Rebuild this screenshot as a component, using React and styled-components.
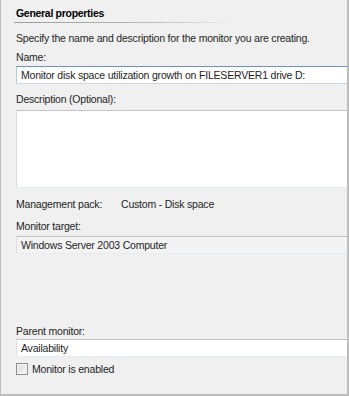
import React from 'react'
import styled, { createGlobalStyle } from 'styled-components'

const GlobalStyle = createGlobalStyle`
  html, body {
    margin: 0;
    padding: 0;
    background: #f0f0f0;
  }
  * {
    box-sizing: border-box;
  }
`

const Frame = styled.div`
  width: 349px;
  height: 396px;
  background: #f0f0f0;
  border-left: 1px solid #bcbcbc;
  border-right: 2px solid #bcbcbc;
  border-bottom: 2px solid #bcbcbc;
  padding: 6px 0 0 14px;
  font-family: 'Liberation Sans', Arial, sans-serif;
  font-size: 10.5px;
  letter-spacing: -0.2px;
  color: #1e1e1e;
  display: flex;
  flex-direction: column;
`

const Header = styled.div`
  font-weight: bold;
  font-size: 10.5px;
  letter-spacing: -0.3px;
  line-height: 14px;
  color: #000;
  padding: 0 0 2px 1px;
`

const Rule = styled.div`
  height: 1px;
  width: 220px;
  margin-left: -1px;
  background: linear-gradient(to right, #9a9a9a 0%, #b8b8b8 60%, rgba(240, 240, 240, 0) 100%);
`

const Text = styled.div`
  line-height: 16px;
  margin-top: ${p => p.$top || 0}px;
  padding-left: 1px;
  white-space: nowrap;
`

const Field = styled.div`
  height: 18px;
  margin-top: ${p => p.$top || 0}px;
  margin-left: 1px;
  background: ${p => (p.$readonly ? '#f3f3f3' : '#fff')};
  border-top: 1px solid ${p => (p.$focus ? '#6a94c8' : '#c3c3c3')};
  border-left: 1px solid ${p => (p.$focus ? '#b4c8e4' : '#dedede')};
  border-bottom: 1px solid ${p => (p.$focus ? '#c4d8ec' : '#e4ecf4')};
  padding: 1px 0 0 4px;
  line-height: 15px;
  white-space: nowrap;
  overflow: hidden;
`

const Area = styled.div`
  height: 78px;
  margin-top: 3px;
  margin-left: 1px;
  background: #fff;
  border-top: 1px solid #c3c3c3;
  border-left: 1px solid #dedede;
  border-bottom: 1px solid #e4ecf4;
`

const Pair = styled.div`
  display: flex;
  line-height: 16px;
  margin-top: 8px;
  padding-left: 1px;
`

const PairLabel = styled.span`
  width: 105px;
`

const CheckRow = styled.label`
  display: flex;
  align-items: center;
  gap: 4px;
  margin-top: 4px;
  margin-left: 1px;
  line-height: 16px;
`

const Box = styled.span`
  width: 12px;
  height: 12px;
  border: 1px solid #8e8f8f;
  background: linear-gradient(135deg, #dcdcdc, #f6f6f6);
  box-shadow: inset 0 0 0 1px #f4f4f4;
`

const App = () => (
  <>
    <GlobalStyle />
    <Frame>
      <Header>General properties</Header>
      <Rule />
      <Text $top={7}>Specify the name and description for the monitor you are creating.</Text>
      <Text $top={3}>Name:</Text>
      <Field $focus $top={1}>Monitor disk space utilization growth on FILESERVER1 drive D:</Field>
      <Text $top={7}>Description (Optional):</Text>
      <Area />
      <Pair>
        <PairLabel>Management pack:</PairLabel>
        <span>Custom - Disk space</span>
      </Pair>
      <Text $top={6}>Monitor target:</Text>
      <Field $readonly $top={2}>Windows Server 2003 Computer</Field>
      <Text $top={69}>Parent monitor:</Text>
      <Field>Availability</Field>
      <CheckRow>
        <Box />
        <span>Monitor is enabled</span>
      </CheckRow>
    </Frame>
  </>
)

export default App
